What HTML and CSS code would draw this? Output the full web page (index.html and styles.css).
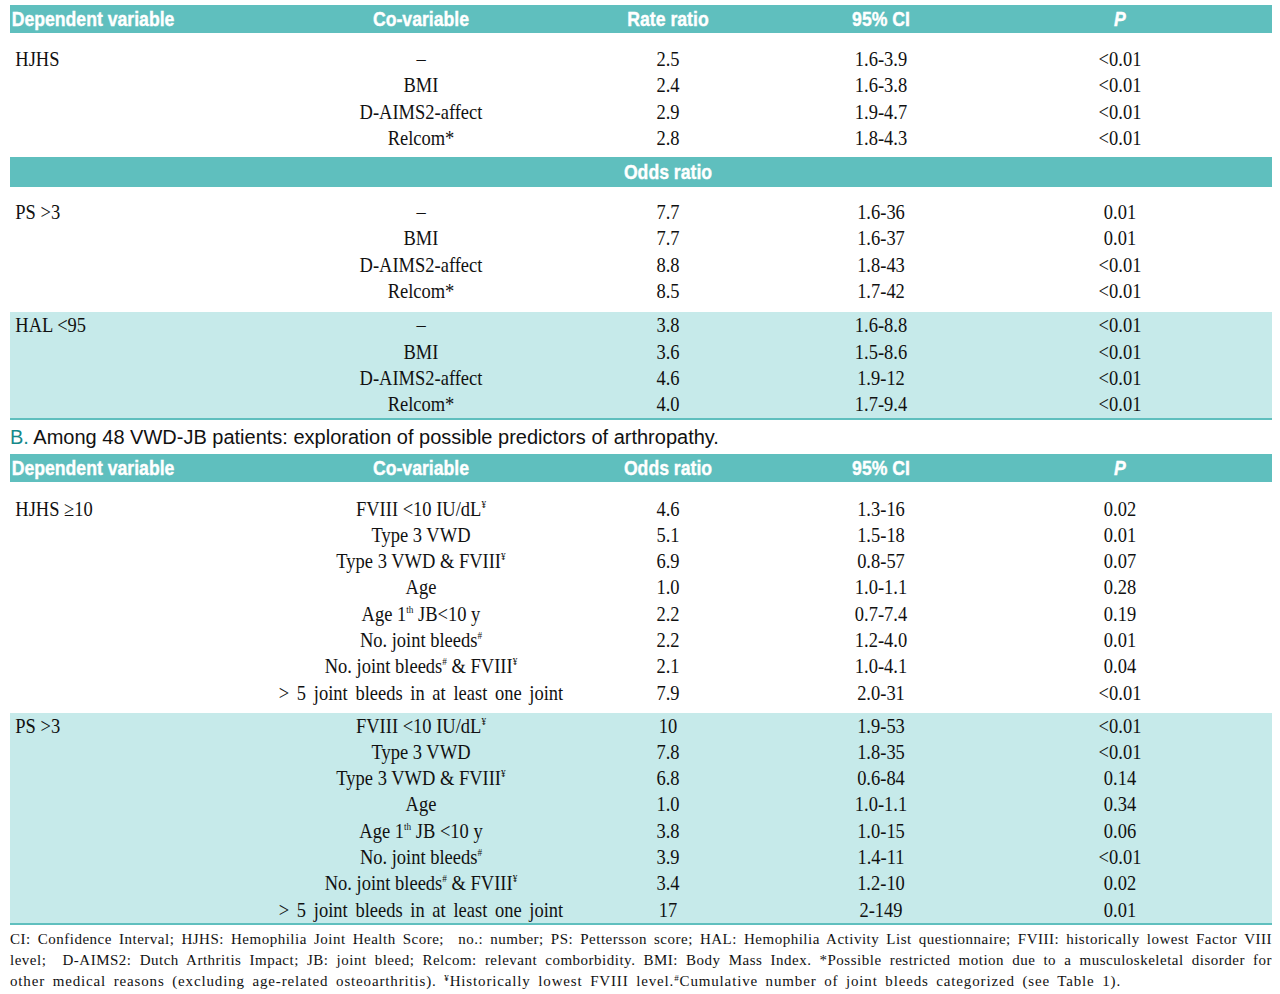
FILE: index.html
```
<!DOCTYPE html>
<html lang="en">
<head>
<meta charset="utf-8">
<title>Table</title>
<link rel="stylesheet" href="styles.css">
</head>
<body>
<div class="page">
  <div class="hdr grid">
    <div class="h l">Dependent variable</div>
    <div class="h">Co-variable</div>
    <div class="h">Rate ratio</div>
    <div class="h">95% CI</div>
    <div class="h"><i>P</i></div>
  </div>

  <div class="group grid g1">
    <div class="c l">HJHS</div><div class="c">–</div><div class="c">2.5</div><div class="c">1.6-3.9</div><div class="c">&lt;0.01</div>
    <div class="c l"></div><div class="c">BMI</div><div class="c">2.4</div><div class="c">1.6-3.8</div><div class="c">&lt;0.01</div>
    <div class="c l"></div><div class="c">D-AIMS2-affect</div><div class="c">2.9</div><div class="c">1.9-4.7</div><div class="c">&lt;0.01</div>
    <div class="c l"></div><div class="c">Relcom*</div><div class="c">2.8</div><div class="c">1.8-4.3</div><div class="c">&lt;0.01</div>
  </div>

  <div class="band grid">
    <div class="h l"></div><div class="h"></div><div class="h">Odds ratio</div><div class="h"></div><div class="h"></div>
  </div>

  <div class="group grid g2">
    <div class="c l">PS &gt;3</div><div class="c">–</div><div class="c">7.7</div><div class="c">1.6-36</div><div class="c">0.01</div>
    <div class="c l"></div><div class="c">BMI</div><div class="c">7.7</div><div class="c">1.6-37</div><div class="c">0.01</div>
    <div class="c l"></div><div class="c">D-AIMS2-affect</div><div class="c">8.8</div><div class="c">1.8-43</div><div class="c">&lt;0.01</div>
    <div class="c l"></div><div class="c">Relcom*</div><div class="c">8.5</div><div class="c">1.7-42</div><div class="c">&lt;0.01</div>
  </div>

  <div class="group grid shaded">
    <div class="c l">HAL &lt;95</div><div class="c">–</div><div class="c">3.8</div><div class="c">1.6-8.8</div><div class="c">&lt;0.01</div>
    <div class="c l"></div><div class="c">BMI</div><div class="c">3.6</div><div class="c">1.5-8.6</div><div class="c">&lt;0.01</div>
    <div class="c l"></div><div class="c">D-AIMS2-affect</div><div class="c">4.6</div><div class="c">1.9-12</div><div class="c">&lt;0.01</div>
    <div class="c l"></div><div class="c">Relcom*</div><div class="c">4.0</div><div class="c">1.7-9.4</div><div class="c">&lt;0.01</div>
  </div>

  <div class="caption"><span class="cap-b">B.</span> Among 48 VWD-JB patients: exploration of possible predictors of arthropathy.</div>

  <div class="hdr grid">
    <div class="h l">Dependent variable</div>
    <div class="h">Co-variable</div>
    <div class="h">Odds ratio</div>
    <div class="h">95% CI</div>
    <div class="h"><i>P</i></div>
  </div>

  <div class="group grid g3">
    <div class="c l">HJHS ≥10</div><div class="c">FVIII &lt;10 IU/dL<sup>¥</sup></div><div class="c">4.6</div><div class="c">1.3-16</div><div class="c">0.02</div>
    <div class="c l"></div><div class="c">Type 3 VWD</div><div class="c">5.1</div><div class="c">1.5-18</div><div class="c">0.01</div>
    <div class="c l"></div><div class="c">Type 3 VWD &amp; FVIII<sup>¥</sup></div><div class="c">6.9</div><div class="c">0.8-57</div><div class="c">0.07</div>
    <div class="c l"></div><div class="c">Age</div><div class="c">1.0</div><div class="c">1.0-1.1</div><div class="c">0.28</div>
    <div class="c l"></div><div class="c">Age 1<sup>th</sup> JB&lt;10 y</div><div class="c">2.2</div><div class="c">0.7-7.4</div><div class="c">0.19</div>
    <div class="c l"></div><div class="c">No. joint bleeds<sup>#</sup></div><div class="c">2.2</div><div class="c">1.2-4.0</div><div class="c">0.01</div>
    <div class="c l"></div><div class="c">No. joint bleeds<sup>#</sup> &amp; FVIII<sup>¥</sup></div><div class="c">2.1</div><div class="c">1.0-4.1</div><div class="c">0.04</div>
    <div class="c l"></div><div class="c long">&gt; 5 joint bleeds in at least one joint</div><div class="c">7.9</div><div class="c">2.0-31</div><div class="c">&lt;0.01</div>
  </div>

  <div class="group grid shaded">
    <div class="c l">PS &gt;3</div><div class="c">FVIII &lt;10 IU/dL<sup>¥</sup></div><div class="c">10</div><div class="c">1.9-53</div><div class="c">&lt;0.01</div>
    <div class="c l"></div><div class="c">Type 3 VWD</div><div class="c">7.8</div><div class="c">1.8-35</div><div class="c">&lt;0.01</div>
    <div class="c l"></div><div class="c">Type 3 VWD &amp; FVIII<sup>¥</sup></div><div class="c">6.8</div><div class="c">0.6-84</div><div class="c">0.14</div>
    <div class="c l"></div><div class="c">Age</div><div class="c">1.0</div><div class="c">1.0-1.1</div><div class="c">0.34</div>
    <div class="c l"></div><div class="c">Age 1<sup>th</sup> JB &lt;10 y</div><div class="c">3.8</div><div class="c">1.0-15</div><div class="c">0.06</div>
    <div class="c l"></div><div class="c">No. joint bleeds<sup>#</sup></div><div class="c">3.9</div><div class="c">1.4-11</div><div class="c">&lt;0.01</div>
    <div class="c l"></div><div class="c">No. joint bleeds<sup>#</sup> &amp; FVIII<sup>¥</sup></div><div class="c">3.4</div><div class="c">1.2-10</div><div class="c">0.02</div>
    <div class="c l"></div><div class="c long">&gt; 5 joint bleeds in at least one joint</div><div class="c">17</div><div class="c">2-149</div><div class="c">0.01</div>
  </div>

  <div class="notes">
    <div class="nl just">CI: Confidence Interval; HJHS: Hemophilia Joint Health Score;&nbsp; no.: number; PS: Pettersson score; HAL: Hemophilia Activity List questionnaire; FVIII: historically lowest Factor VIII</div>
    <div class="nl just">level;&nbsp; D-AIMS2: Dutch Arthritis Impact; JB: joint bleed; Relcom: relevant comborbidity. BMI: Body Mass Index. *Possible restricted motion due to a musculoskeletal disorder for</div>
    <div class="nl last">other medical reasons (excluding age-related osteoarthritis). <sup>¥</sup>Historically lowest FVIII level.<sup>#</sup>Cumulative number of joint bleeds categorized (see Table 1).</div>
  </div>
</div>
</body>
</html>
```

FILE: styles.css
```
html, body {
  margin: 0;
  padding: 0;
  background: #ffffff;
}

.page {
  width: 1262px;
  margin-left: 10px;
  padding-top: 5px;
  color: #111111;
  font-family: "Liberation Serif", "Times New Roman", serif;
}

.grid {
  display: grid;
  grid-template-columns: 240px 342px 152px 274px 204px 50px;
}

.hdr, .band {
  background: #5fbfbe;
  color: #ffffff;
  font-family: "Liberation Sans", Arial, sans-serif;
  font-weight: 700;
  font-size: 21px;
  height: 28px;
  line-height: 28px;
}

.band {
  height: 30px;
  line-height: 30px;
}

.h {
  text-align: center;
  white-space: nowrap;
  transform: scaleX(0.84);
  -webkit-text-stroke: 0.4px #ffffff;
}

.h.l {
  text-align: left;
  padding-left: 2px;
  transform-origin: left center;
}

.group {
  grid-auto-rows: 26.3px;
  font-size: 21px;
  line-height: 26.3px;
}

.g1 {
  padding-top: 13px;
  padding-bottom: 6px;
}

.g2 {
  padding-top: 12px;
  padding-bottom: 8px;
}

.g3 {
  padding-top: 14px;
  padding-bottom: 6.6px;
}

.shaded {
  background: #c6eaea;
  border-bottom: 2px solid #5fbfbe;
}

.c {
  text-align: center;
  white-space: nowrap;
  transform: scaleX(0.88);
}

.c.l {
  grid-column: 1;
  text-align: left;
  padding-left: 6px;
  transform-origin: left center;
}

.c.long {
  word-spacing: 3.5px;
}

sup {
  font-size: 0.5em;
  line-height: 0;
  vertical-align: 0.75em;
}

.caption {
  font-family: "Liberation Sans", Arial, sans-serif;
  font-size: 20px;
  line-height: 34px;
  height: 34px;
  color: #111111;
  white-space: nowrap;
}

.cap-b {
  color: #16898a;
}

.notes {
  padding-top: 4px;
  font-family: "Liberation Serif", "Times New Roman", serif;
  font-size: 15px;
  line-height: 21px;
  letter-spacing: 0.5px;
  color: #111111;
}

.nl {
  white-space: nowrap;
}

.nl.just {
  white-space: normal;
  text-align: justify;
  text-align-last: justify;
}

.nl.last {
  letter-spacing: 0.85px;
  word-spacing: 3px;
}

.notes sup {
  font-size: 0.6em;
  vertical-align: 0.6em;
}
```
